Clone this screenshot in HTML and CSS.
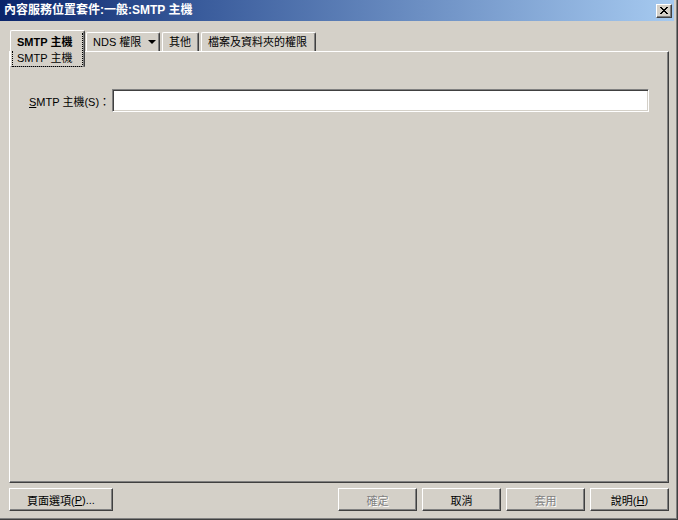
FILE: index.html
```html
<!DOCTYPE html>
<html lang="zh-Hant">
<head>
<meta charset="utf-8">
<title>內容服務位置套件</title>
<link rel="stylesheet" href="styles.css">
</head>
<body>
<div class="window">
  <div class="titlebar">
    <span class="title">內容服務位置套件:一般:SMTP 主機</span>
    <span class="close">
      <svg width="8" height="7" viewBox="0 0 8 7"><path d="M0 0h2v1h-2zM6 0h2v1h-2zM1 1h2v1h-2zM5 1h2v1h-2zM2 2h4v1h-4zM3 3h2v1h-2zM2 4h4v1h-4zM1 5h2v1h-2zM5 5h2v1h-2zM0 6h2v1h-2zM6 6h2v1h-2z" fill="#000"/></svg>
    </span>
  </div>
  <div class="body">
    <div class="tabs">
      <div class="tab active">
        <div class="tab-inner">
          <div class="tab-main">SMTP 主機</div>
          <div class="tab-sub">SMTP 主機</div>
        </div>
      </div>
      <div class="tab nds">NDS 權限<span class="arrow"></span></div>
      <div class="tab other">其他</div>
      <div class="tab files">檔案及資料夾的權限</div>
    </div>
    <div class="panel">
      <div class="row">
        <label class="label"><u>S</u>MTP 主機(S)：</label>
        <div class="field"></div>
      </div>
    </div>
    <div class="buttons">
      <div class="btn wide">頁面選項(<u>P</u>)...</div>
      <div class="spacer"></div>
      <div class="btn disabled">確定</div>
      <div class="btn">取消</div>
      <div class="btn disabled">套用</div>
      <div class="btn">說明(<u>H</u>)</div>
    </div>
  </div>
</div>
</body>
</html>
```
FILE: styles.css
```css
* { box-sizing: border-box; }
html, body { margin: 0; padding: 0; }
body {
  width: 678px;
  height: 520px;
  overflow: hidden;
  background: #d4d0c8;
  font-family: "Liberation Sans", "Noto Sans CJK TC", sans-serif;
  font-size: 11px;
  color: #000;
}
.window {
  width: 678px;
  height: 520px;
  background: #d4d0c8;
  border-right: 1px solid #404040;
  border-bottom: 1px solid #404040;
  box-shadow: inset -1px -1px 0 #808080, inset -2px -2px 0 #d4d0c8;
  display: flex;
  flex-direction: column;
  padding-right: 3px;
  padding-bottom: 2px;
}
.titlebar {
  height: 21px;
  flex: none;
  display: flex;
  align-items: center;
  justify-content: space-between;
  background: linear-gradient(to right, #0a246a 0%, #3a5c9c 30%, #a6caf0 100%);
  padding: 0 2px 0 4px;
}
.title {
  color: #fff;
  font-weight: bold;
  font-size: 12px;
  line-height: 21px;
  white-space: nowrap;
}
.close {
  width: 16px;
  height: 14px;
  background: #d4d0c8;
  border-top: 1px solid #fff;
  border-left: 1px solid #fff;
  border-right: 1px solid #404040;
  border-bottom: 1px solid #404040;
  box-shadow: inset -1px -1px 0 #808080;
  display: flex;
  align-items: center;
  justify-content: center;
  margin-top: 1px;
}
.close svg { display: block; margin-left: -1px; margin-top: -1px; }
.body {
  flex: 1;
  display: flex;
  flex-direction: column;
  padding: 9px 0 0 9px;
}
.tabs {
  height: 21px;
  flex: none;
  display: flex;
  align-items: flex-start;
}
.tab {
  height: 19px;
  margin-top: 2px;
  margin-left: 1px;
  background: #d4d0c8;
  border-left: 1px solid #fff;
  border-top: 1px solid #fff;
  border-right: 1px solid #404040;
  border-top-left-radius: 2px;
  border-top-right-radius: 2px;
  box-shadow: inset -1px 0 0 #808080;
  display: flex;
  align-items: center;
  padding: 0 0 0 6px;
  white-space: nowrap;
  line-height: 14px;
}
.tab.active {
  position: relative;
  z-index: 1;
  height: 37px;
  width: 75px;
  margin-top: 0;
  margin-left: 1px;
  padding: 1px;
  align-items: stretch;
  border-bottom: 1px solid #808080;
}
.tab-inner {
  flex: 1;
  display: flex;
  flex-direction: column;
  border-right: 1px dotted #000;
  margin-top: 1px;
}
.tab-main {
  font-weight: bold;
  padding-left: 5px;
  height: 18px;
  line-height: 18px;
}
.tab-sub {
  flex: 1;
  border-left: 1px dotted #000;
  border-bottom: 1px dotted #000;
  padding-left: 4px;
  line-height: 15px;
}
.nds { width: 74px; }
.other { width: 37px; margin-left: 2px; }
.files { width: 115px; margin-left: 2px; }
.arrow {
  display: inline-block;
  width: 0;
  height: 0;
  margin-left: 7px;
  border-left: 4px solid transparent;
  border-right: 4px solid transparent;
  border-top: 4px solid #000;
}
.panel {
  width: 660px;
  height: 432px;
  flex: none;
  border-left: 1px solid #fff;
  border-top: 1px solid #fff;
  border-right: 1px solid #404040;
  border-bottom: 1px solid #404040;
  box-shadow: inset -1px -1px 0 #808080;
  padding: 37px 19px 0 18px;
}
.row {
  display: flex;
  align-items: center;
  height: 23px;
}
.label {
  width: 84px;
  flex: none;
  white-space: nowrap;
  padding-left: 1px;
}
.field {
  flex: 1;
  height: 23px;
  background: #fff;
  border-top: 1px solid #808080;
  border-left: 1px solid #808080;
  border-right: 1px solid #fff;
  border-bottom: 1px solid #fff;
  box-shadow: inset 1px 1px 0 #404040, inset -1px -1px 0 #d4d0c8;
}
.buttons {
  display: flex;
  margin-top: 5px;
  padding-right: 5px;
  gap: 5px;
}
.spacer { flex: 1; }
.btn {
  width: 79px;
  height: 23px;
  border-top: 1px solid #fff;
  border-left: 1px solid #fff;
  border-right: 1px solid #404040;
  border-bottom: 1px solid #404040;
  box-shadow: inset -1px -1px 0 #808080;
  display: flex;
  align-items: center;
  justify-content: center;
  white-space: nowrap;
}
.btn.wide { width: 104px; }
.btn.disabled {
  color: #808080;
  text-shadow: 1px 1px 0 #fff;
}
u { text-decoration: underline; text-underline-offset: 1px; }
```
